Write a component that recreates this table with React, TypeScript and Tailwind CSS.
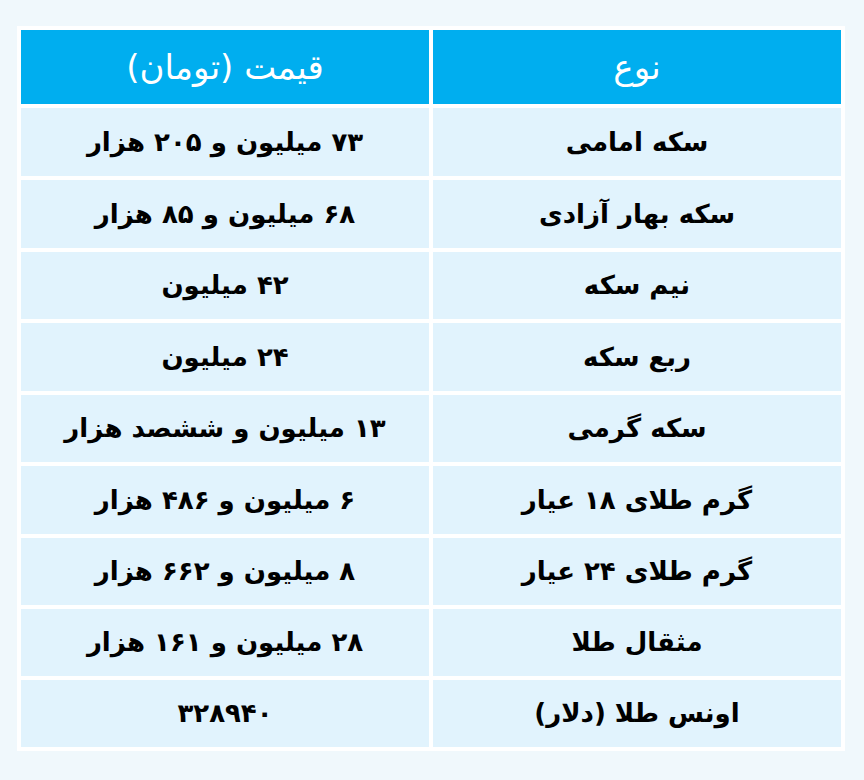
import React from "react";

const rows: [string, string][] = [
  ["سکه امامی", "۷۳ میلیون و ۲۰۵ هزار"],
  ["سکه بهار آزادی", "۶۸ میلیون و ۸۵ هزار"],
  ["نیم سکه", "۴۲ میلیون"],
  ["ربع سکه", "۲۴ میلیون"],
  ["سکه گرمی", "۱۳ میلیون و ششصد هزار"],
  ["گرم طلای ۱۸ عیار", "۶ میلیون و ۴۸۶ هزار"],
  ["گرم طلای ۲۴ عیار", "۸ میلیون و ۶۶۲ هزار"],
  ["مثقال طلا", "۲۸ میلیون و ۱۶۱ هزار"],
  ["اونس طلا (دلار)", "۳۲۸۹۴۰"],
];

const heights = ["h-[68px]", "h-[68px]", "h-[67px]", "h-[68px]", "h-[67px]", "h-[68px]", "h-[67px]", "h-[67px]", "h-[67px]"];

export default function App() {
  return (
    <div className="w-[864px] h-[780px] bg-[#f0f8fc] pt-[26px] pl-[17px]" style={{ fontFamily: '"DejaVu Sans", "Noto Sans", sans-serif' }}>
      <div dir="rtl" className="w-[828px] bg-white p-1 flex flex-col gap-1">
        <div className="grid grid-cols-2 gap-1 h-[74px]">
          <div className="bg-[#00aeef] text-white text-[34px] flex items-center justify-center">نوع</div>
          <div className="bg-[#00aeef] text-white text-[34px] flex items-center justify-center">قیمت (تومان)</div>
        </div>
        {rows.map(([a, b], i) => (
          <div key={i} className={`grid grid-cols-2 gap-1 ${heights[i]}`}>
            <div className="bg-[#e1f3fd] text-black font-bold text-[26px] flex items-center justify-center">{a}</div>
            <div className="bg-[#e1f3fd] text-black font-bold text-[26px] flex items-center justify-center">{b}</div>
          </div>
        ))}
      </div>
    </div>
  );
}
